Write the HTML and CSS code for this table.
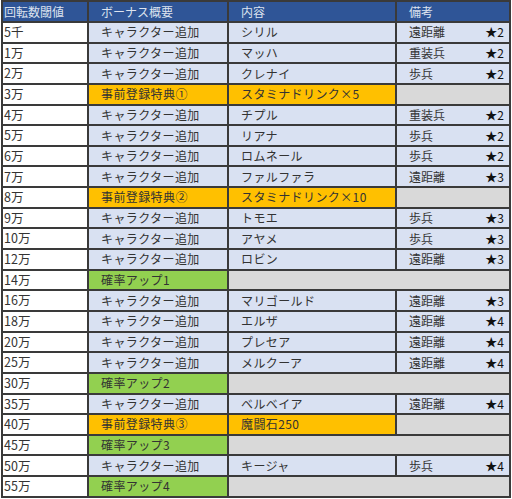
FILE: index.html
```html
<!DOCTYPE html>
<html lang="ja">
<head>
<meta charset="utf-8">
<link rel="stylesheet" href="styles.css">
</head>
<body>
<div class="sheet">
  <div class="c hd">回転数閾値</div><div class="c hd pad">ボーナス概要</div><div class="c hd pad">内容</div><div class="c hd pad">備考</div>

  <div class="c w">5千</div><div class="c b pad">キャラクター追加</div><div class="c b pad">シリル</div><div class="c b pad note"><span>遠距離</span><span class="star">★2</span></div>
  <div class="c w">1万</div><div class="c b pad">キャラクター追加</div><div class="c b pad">マッハ</div><div class="c b pad note"><span>重装兵</span><span class="star">★2</span></div>
  <div class="c w">2万</div><div class="c b pad">キャラクター追加</div><div class="c b pad">クレナイ</div><div class="c b pad note"><span>歩兵</span><span class="star">★2</span></div>
  <div class="c w">3万</div><div class="c o pad">事前登録特典①</div><div class="c o pad">スタミナドリンク×5</div><div class="c g"></div>
  <div class="c w">4万</div><div class="c b pad">キャラクター追加</div><div class="c b pad">チプル</div><div class="c b pad note"><span>重装兵</span><span class="star">★2</span></div>
  <div class="c w">5万</div><div class="c b pad">キャラクター追加</div><div class="c b pad">リアナ</div><div class="c b pad note"><span>歩兵</span><span class="star">★2</span></div>
  <div class="c w">6万</div><div class="c b pad">キャラクター追加</div><div class="c b pad">ロムネール</div><div class="c b pad note"><span>歩兵</span><span class="star">★2</span></div>
  <div class="c w">7万</div><div class="c b pad">キャラクター追加</div><div class="c b pad">ファルファラ</div><div class="c b pad note"><span>遠距離</span><span class="star">★3</span></div>
  <div class="c w">8万</div><div class="c o pad">事前登録特典②</div><div class="c o pad">スタミナドリンク×10</div><div class="c g"></div>
  <div class="c w">9万</div><div class="c b pad">キャラクター追加</div><div class="c b pad">トモエ</div><div class="c b pad note"><span>歩兵</span><span class="star">★3</span></div>
  <div class="c w">10万</div><div class="c b pad">キャラクター追加</div><div class="c b pad">アヤメ</div><div class="c b pad note"><span>歩兵</span><span class="star">★3</span></div>
  <div class="c w">12万</div><div class="c b pad">キャラクター追加</div><div class="c b pad">ロビン</div><div class="c b pad note"><span>遠距離</span><span class="star">★3</span></div>
  <div class="c w">14万</div><div class="c gr pad">確率アップ1</div><div class="c g span2"></div>
  <div class="c w">16万</div><div class="c b pad">キャラクター追加</div><div class="c b pad">マリゴールド</div><div class="c b pad note"><span>遠距離</span><span class="star">★3</span></div>
  <div class="c w">18万</div><div class="c b pad">キャラクター追加</div><div class="c b pad">エルザ</div><div class="c b pad note"><span>遠距離</span><span class="star">★4</span></div>
  <div class="c w">20万</div><div class="c b pad">キャラクター追加</div><div class="c b pad">プレセア</div><div class="c b pad note"><span>遠距離</span><span class="star">★4</span></div>
  <div class="c w">25万</div><div class="c b pad">キャラクター追加</div><div class="c b pad">メルクーア</div><div class="c b pad note"><span>遠距離</span><span class="star">★4</span></div>
  <div class="c w">30万</div><div class="c gr pad">確率アップ2</div><div class="c g span2"></div>
  <div class="c w">35万</div><div class="c b pad">キャラクター追加</div><div class="c b pad">ベルベイア</div><div class="c b pad note"><span>遠距離</span><span class="star">★4</span></div>
  <div class="c w">40万</div><div class="c o pad">事前登録特典③</div><div class="c o pad">魔闘石250</div><div class="c g"></div>
  <div class="c w">45万</div><div class="c gr pad">確率アップ3</div><div class="c g span2"></div>
  <div class="c w">50万</div><div class="c b pad">キャラクター追加</div><div class="c b pad">キージャ</div><div class="c b pad note"><span>歩兵</span><span class="star">★4</span></div>
  <div class="c w">55万</div><div class="c gr pad">確率アップ4</div><div class="c g span2"></div>
</div>
</body>
</html>
```

FILE: styles.css
```css
html, body {
  margin: 0;
  padding: 0;
  background: #ffffff;
}
body {
  font-family: "Noto Sans CJK JP", "Noto Sans", sans-serif;
  font-size: 12px;
  color: #333333;
}
.sheet {
  display: grid;
  grid-template-columns: 84px 138px 166px 112px;
  grid-template-rows: 19px repeat(23, 18.65px);
  gap: 2px;
  padding: 2px;
  margin-left: 1px;
  width: max-content;
  background: #3a3a3a;
}
.c {
  display: flex;
  align-items: center;
  padding-left: 1px;
  white-space: nowrap;
  overflow: hidden;
  line-height: 1;
}
.w {
  background: #ffffff;
  font-size: 12.5px;
}
.pad {
  padding-left: 12px;
  letter-spacing: 0.4px;
}
.hd {
  background: #2f5597;
  color: #dde3ef;
  font-size: 12px;
  letter-spacing: 0;
}
.b { background: #d9e1f2; }
.o { background: #ffc000; }
.gr { background: #92d050; }
.g { background: #d9d9d9; }
.span2 { grid-column: span 2; }
.note {
  justify-content: space-between;
  padding-right: 5px;
  letter-spacing: 0;
}
.star {
  color: #111111;
}
```
